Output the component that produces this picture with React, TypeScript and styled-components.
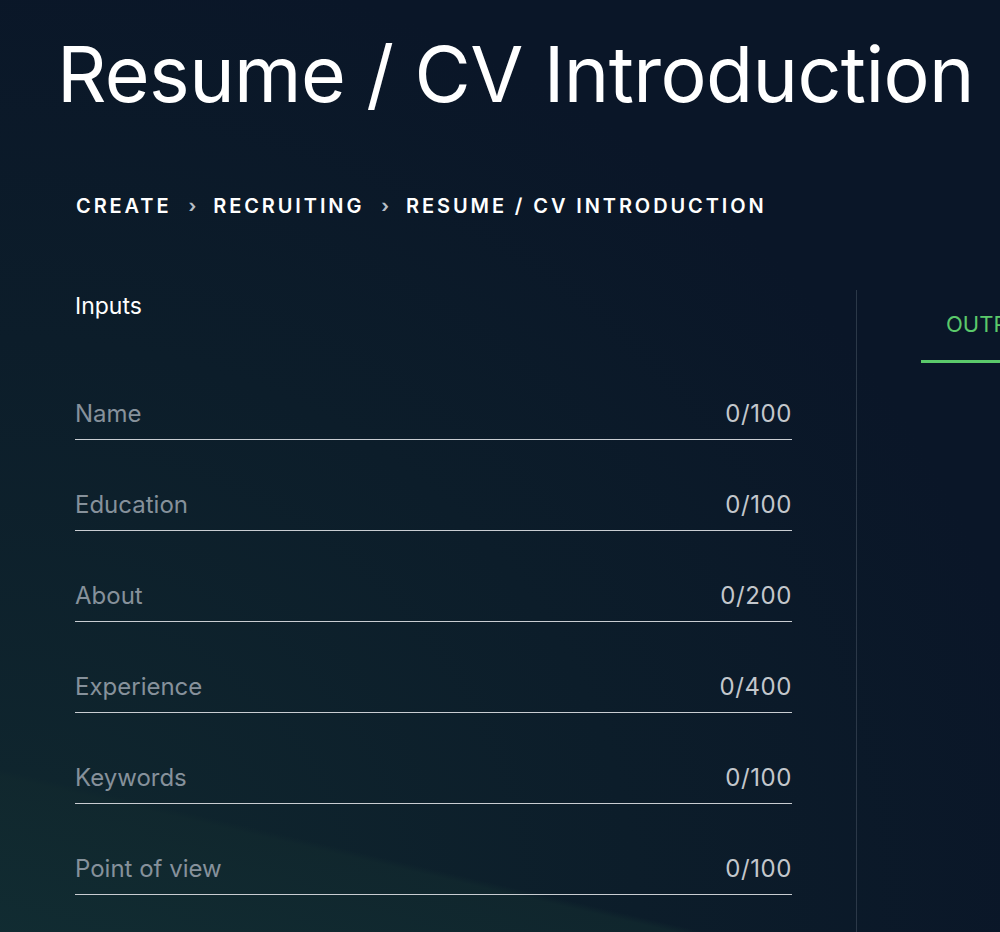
import { createGlobalStyle, styled } from 'styled-components'

const GlobalStyle = createGlobalStyle`
	html, body {
		margin: 0;
		padding: 0;
		background: #0a1628;
	}
	body {
		font-family: Inter, 'Noto Sans', sans-serif;
		color: #ffffff;
	}
`

const Page = styled.div`
	position: relative;
	width: 1000px;
	height: 932px;
	overflow: hidden;
	background:
		linear-gradient(193deg, rgba(10, 22, 40, 0) 0%, rgba(10, 22, 40, 0) 86%, rgba(17, 40, 46, 0.8) 86.6%, rgba(17, 44, 50, 0.9) 100%),
		radial-gradient(ellipse at 0% 100%, #10282f 0%, #0c1d2a 45%, #0a1628 75%);
`

const Title = styled.h1`
	margin: 0;
	padding: 28px 0 0 57px;
	font-size: 77px;
	font-weight: 400;
	line-height: 92px;
	letter-spacing: -0.6px;
	white-space: nowrap;
`

const Crumbs = styled.nav`
	display: flex;
	align-items: center;
	gap: 17px;
	padding: 74px 0 0 76px;
	font-size: 20px;
	font-weight: 600;
	letter-spacing: 2.9px;
	line-height: 24px;
`

const Chevron = styled.span`
	color: #b7bec6;
	font-size: 18px;
	font-weight: 700;
	letter-spacing: 0;
`

const Body = styled.div`
	display: flex;
	padding: 70px 0 0 75px;
`

const InputsColumn = styled.section`
	width: 717px;
	flex: none;
`

const SectionLabel = styled.div`
	font-size: 23px;
	line-height: 32px;
	padding-top: 2px;
	color: #ffffff;
`

const FieldList = styled.div`
	display: flex;
	flex-direction: column;
	gap: 41px;
	padding-top: 68px;
`

const Field = styled.div`
	display: flex;
	justify-content: space-between;
	align-items: flex-end;
	height: 50px;
	padding-bottom: 10px;
	box-sizing: border-box;
	border-bottom: 1px solid #c9cdd2;
	font-size: 24px;
	line-height: 30px;
`

const FieldName = styled.span`
	color: #86919b;
`

const Counter = styled.span`
	color: #c3c7cc;
	letter-spacing: 0.6px;
`

const Divider = styled.div`
	width: 1px;
	margin: 2px 0 0 64px;
	height: 700px;
	background: #2b3848;
	flex: none;
`

const OutputColumn = styled.section`
	padding-left: 64px;
	flex: none;
`

const Tab = styled.div`
	width: 120px;
	padding: 22px 0 0 25px;
	height: 50px;
	border-bottom: 3px solid #5bc96b;
	color: #5bc96b;
	font-size: 22px;
	line-height: 28px;
	white-space: nowrap;
`

const fields = [
	{ name: 'Name', max: 100 },
	{ name: 'Education', max: 100 },
	{ name: 'About', max: 200 },
	{ name: 'Experience', max: 400 },
	{ name: 'Keywords', max: 100 },
	{ name: 'Point of view', max: 100 },
]

export default function App() {
	return (
		<>
			<GlobalStyle />
			<Page>
				<Title>Resume / CV Introduction</Title>
				<Crumbs>
					<span>CREATE</span>
					<Chevron>›</Chevron>
					<span>RECRUITING</span>
					<Chevron>›</Chevron>
					<span>RESUME / CV INTRODUCTION</span>
				</Crumbs>
				<Body>
					<InputsColumn>
						<SectionLabel>Inputs</SectionLabel>
						<FieldList>
							{fields.map((f) => (
								<Field key={f.name}>
									<FieldName>{f.name}</FieldName>
									<Counter>0/{f.max}</Counter>
								</Field>
							))}
						</FieldList>
					</InputsColumn>
					<Divider />
					<OutputColumn>
						<Tab>OUTPUT</Tab>
					</OutputColumn>
				</Body>
			</Page>
		</>
	)
}
